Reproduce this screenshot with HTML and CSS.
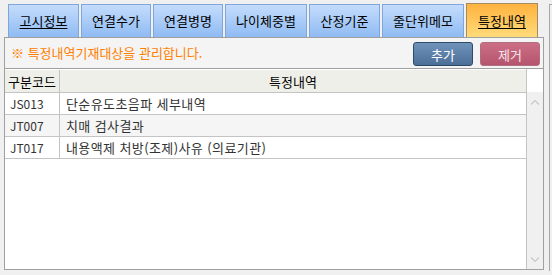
FILE: index.html
```html
<!DOCTYPE html>
<html lang="ko">
<head>
<meta charset="utf-8">
<link rel="stylesheet" href="styles.css">
</head>
<body>
<div class="screen">
  <div class="main">
    <div class="tabs">
      <div class="tab w1 underline">고시정보</div>
      <div class="tab w2">연결수가</div>
      <div class="tab w3">연결병명</div>
      <div class="tab w4">나이체중별</div>
      <div class="tab w5">산정기준</div>
      <div class="tab w6">줄단위메모</div>
      <div class="tab w7 active underline">특정내역</div>
    </div>
    <div class="panel">
      <div class="toolbar">
        <div class="notice">※ 특정내역기재대상을 관리합니다.</div>
        <div class="buttons">
          <button class="btn add">추가</button>
          <button class="btn remove">제거</button>
        </div>
      </div>
      <div class="grid">
        <div class="table">
          <div class="row head">
            <div class="c1">구분코드</div>
            <div class="c2 center">특정내역</div>
          </div>
          <div class="row">
            <div class="c1">JS013</div>
            <div class="c2">단순유도초음파 세부내역</div>
          </div>
          <div class="row alt">
            <div class="c1">JT007</div>
            <div class="c2">치매 검사결과</div>
          </div>
          <div class="row">
            <div class="c1">JT017</div>
            <div class="c2">내용액제 처방(조제)사유 (의료기관)</div>
          </div>
        </div>
        <div class="side">
          <div class="corner"></div>
          <div class="scroll">
            <svg class="arrow" width="10" height="6" viewBox="0 0 10 6"><path d="M1 5.5 L5 1.5 L9 5.5" fill="none" stroke="#c8c8c8" stroke-width="1.2"/></svg>
            <svg class="arrow" width="10" height="6" viewBox="0 0 10 6"><path d="M1 0.5 L5 4.5 L9 0.5" fill="none" stroke="#c8c8c8" stroke-width="1.2"/></svg>
          </div>
        </div>
      </div>
    </div>
  </div>
  <div class="edge"></div>
</div>
</body>
</html>
```

FILE: styles.css
```css
* { box-sizing: border-box; }
html, body { margin: 0; padding: 0; }
body {
  width: 552px;
  height: 275px;
  background: #f0f0f0;
  font-family: "Noto Sans CJK KR", "Noto Sans", sans-serif;
  font-size: 12px;
  color: #000;
  overflow: hidden;
}
.screen {
  display: flex;
  padding: 3px 0 0 4px;
  height: 275px;
}
.main {
  width: 540px;
  display: flex;
  flex-direction: column;
}
.tabs {
  display: flex;
  align-items: flex-end;
  gap: 2px;
  height: 34px;
  padding-left: 4px;
}
.tab {
  height: 33px;
  border: 1px solid #7ea6dc;
  border-bottom: none;
  background: linear-gradient(#c4dcfc, #8fbbf3);
  display: flex;
  align-items: center;
  justify-content: center;
  font-size: 13px;
  padding-bottom: 1px;
}
.tab.active {
  height: 34px;
  border-color: #a58a66;
  background: linear-gradient(#ffb23f, #ffdb7a);
}
.underline { text-decoration: underline; text-underline-offset: 2px; }
.w1 { width: 71px; }
.w2 { width: 70px; }
.w3 { width: 70px; }
.w4 { width: 82px; }
.w5 { width: 71px; }
.w6 { width: 82px; }
.w7 { width: 72px; }
.panel {
  width: 540px;
  height: 233px;
  border: 1px solid #a0a0a0;
  background: #f4f4f4;
  display: flex;
  flex-direction: column;
}
.toolbar {
  height: 30px;
  display: flex;
  align-items: center;
  justify-content: space-between;
  padding: 0 3px 0 6px;
}
.notice {
  color: #ff8000;
  font-size: 13px;
  margin-top: -2px;
}
.buttons {
  display: flex;
  gap: 7px;
  margin-top: 2px;
}
.btn {
  width: 60px;
  height: 24px;
  border-radius: 3px;
  font-family: inherit;
  font-size: 13px;
  padding: 0;
  color: #fff;
}
.add {
  border: 1px solid #2f4a66;
  background: linear-gradient(#6f92bb, #4c6f98);
}
.remove {
  border: 1px solid #b06f80;
  background: linear-gradient(#cc6f86, #b5546e);
  color: #f7e6ea;
}
.grid {
  flex: 1;
  display: flex;
  border-top: 1px solid #a0a0a0;
  background: #fff;
}
.table {
  width: 521px;
  display: flex;
  flex-direction: column;
}
.row {
  display: flex;
  height: 22px;
  border-bottom: 1px solid #c4c4c4;
  background: #fff;
  color: #333;
}
.row.alt { background: #f5f5f5; }
.row.head {
  height: 24px;
  background: #efefe9;
  color: #000;
  border-top: 1px solid #fff;
  font-size: 13px;
}
.c1 {
  width: 55px;
  border-right: 1px solid #c4c4c4;
  display: flex;
  align-items: center;
  padding-left: 5px;
}
.c2 {
  flex: 1;
  display: flex;
  align-items: center;
  padding-left: 6px;
  font-size: 13px;
}
.row .c2:not(.center) { letter-spacing: 0.4px; }
.c2.center { justify-content: center; padding-left: 0; }
.row.head .c1 { padding-left: 3px; }
.side {
  flex: 1;
  display: flex;
  flex-direction: column;
  border-left: 1px solid #c4c4c4;
}
.corner {
  height: 23px;
  background: #fff;
}
.scroll {
  flex: 1;
  background: #f0f0f0;
  display: flex;
  flex-direction: column;
  align-items: center;
  justify-content: space-between;
  padding: 7px 0 6px;
}
.edge {
  margin-left: 5px;
  margin-top: 1px;
  width: 4px;
  height: 267px;
  border-left: 1px solid #a8a8a8;
  border-top: 1px solid #a8a8a8;
}
```
